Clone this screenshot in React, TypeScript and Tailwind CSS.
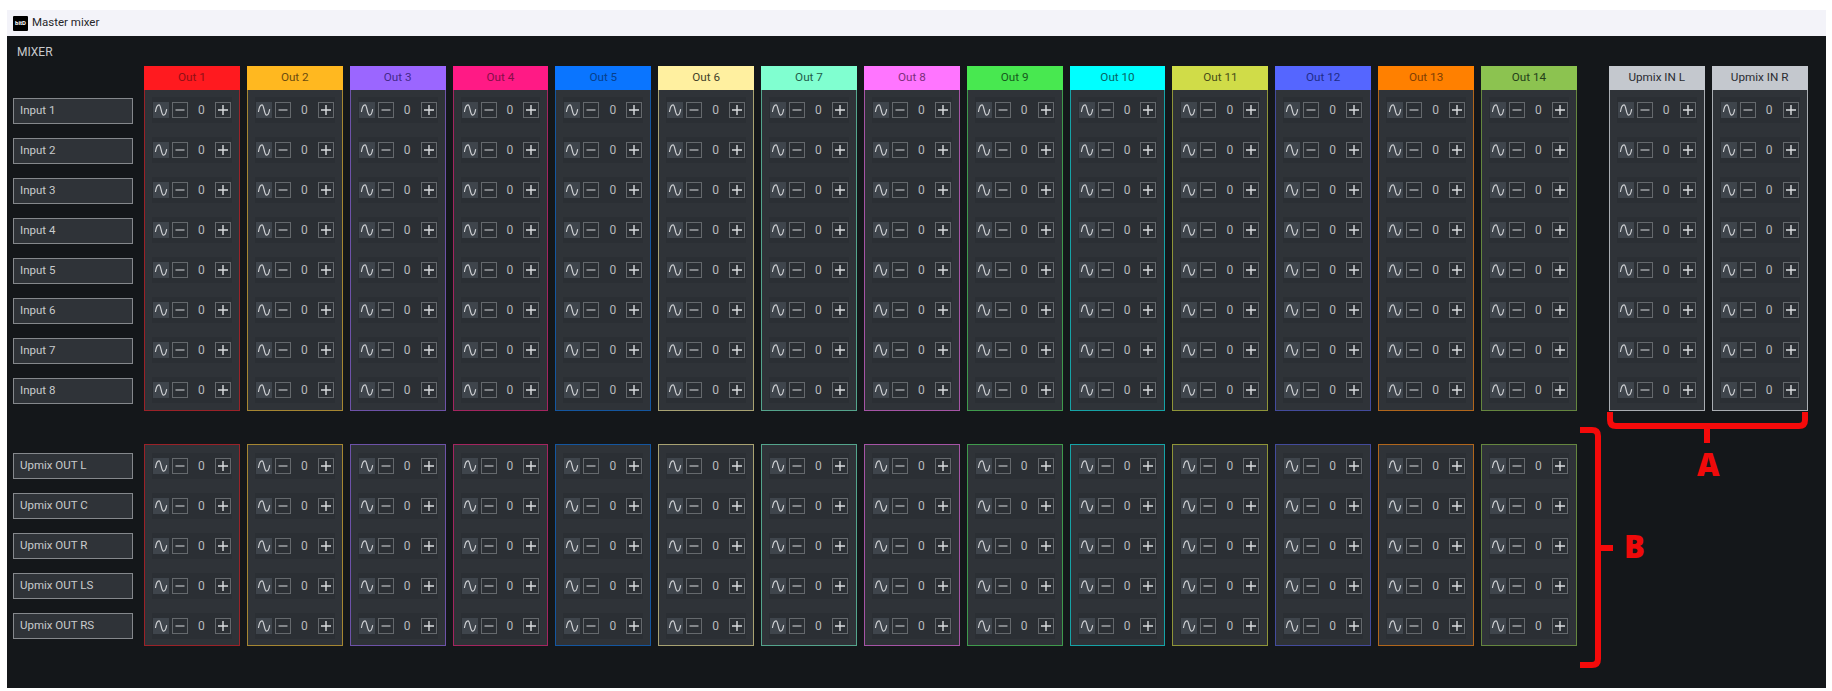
const outs = [
  { name: "Out 1", head: "bg-[#ff1a1f]", text: "text-[#8f1015]", border: "border-[#9a2228]" },
  { name: "Out 2", head: "bg-[#ffb820]", text: "text-[#6b4c10]", border: "border-[#a58632]" },
  { name: "Out 3", head: "bg-[#9b66ff]", text: "text-[#44288a]", border: "border-[#6d52a8]" },
  { name: "Out 4", head: "bg-[#ff1a85]", text: "text-[#850f48]", border: "border-[#a3255f]" },
  { name: "Out 5", head: "bg-[#0a75ff]", text: "text-[#07408c]", border: "border-[#14569f]" },
  { name: "Out 6", head: "bg-[#fff0a0]", text: "text-[#45422a]", border: "border-[#a8a272]" },
  { name: "Out 7", head: "bg-[#80ffd0]", text: "text-[#1f5c4a]", border: "border-[#54a48c]" },
  { name: "Out 8", head: "bg-[#ff75ff]", text: "text-[#7c2f7c]", border: "border-[#a554a5]" },
  { name: "Out 9", head: "bg-[#48e850]", text: "text-[#17591d]", border: "border-[#3f9a4c]" },
  { name: "Out 10", head: "bg-[#00ffff]", text: "text-[#086464]", border: "border-[#16a3a6]" },
  { name: "Out 11", head: "bg-[#d0dc48]", text: "text-[#484c18]", border: "border-[#8e9438]" },
  { name: "Out 12", head: "bg-[#5566ff]", text: "text-[#202c88]", border: "border-[#434b9c]" },
  { name: "Out 13", head: "bg-[#ff8000]", text: "text-[#7f3f05]", border: "border-[#b0661c]" },
  { name: "Out 14", head: "bg-[#8cc350]", text: "text-[#24401a]", border: "border-[#65863f]" },
];

const upmixIn = [
  { name: "Upmix IN L", head: "bg-[#c4c8ce]", text: "text-[#2a2c32]", border: "border-[#a9adb2]" },
  { name: "Upmix IN R", head: "bg-[#c4c8ce]", text: "text-[#2a2c32]", border: "border-[#a9adb2]" },
];

const inputs = ["Input 1", "Input 2", "Input 3", "Input 4", "Input 5", "Input 6", "Input 7", "Input 8"];
const upmixOut = ["Upmix OUT L", "Upmix OUT C", "Upmix OUT R", "Upmix OUT LS", "Upmix OUT RS"];

function Wave() {
  return (
    <div className="w-[16px] h-[16px] bg-[#3f454c] flex items-center justify-center">
      <svg width="16" height="16" viewBox="0 0 16 16" fill="none" stroke="#d0d2d5" strokeWidth="1.2" strokeLinecap="round">
        <path d="M2.5 9.5C3.2 5 4.3 2.8 6 2.8C8.2 2.8 8 13.2 10.6 13.2C12.2 13.2 13 11 13.6 7.5" />
      </svg>
    </div>
  );
}

function StepButton({ plus }: { plus?: boolean }) {
  return (
    <div className="w-[16px] h-[16px] border border-[#65696d] flex items-center justify-center">
      <svg width="14" height="14" viewBox="0 0 14 14" fill="none" stroke={plus ? "#dcdee0" : "#a9acb0"} strokeWidth="1.4">
        <path d={plus ? "M2 7H12M7 2V12" : "M2.5 7H11.5"} />
      </svg>
    </div>
  );
}

function Row() {
  return (
    <div className="h-[26px] mx-[7px] bg-[#2b2f34] flex items-center pl-[1px] pr-[1px]">
      <Wave />
      <div className="ml-[3px]">
        <StepButton />
      </div>
      <div className="flex-1 text-center text-[12px] text-[#b8babd]">0</div>
      <StepButton plus />
    </div>
  );
}

type Col = { name: string; head: string; text: string; border: string };

function Column({ col, rows, header }: { col: Col; rows: number; header?: boolean }) {
  return (
    <div className={`w-[95.85px] shrink-0 border bg-[#2f3338] ${col.border} ${header ? "" : "pt-[8px] pb-[6px]"}`}>
      {header && (
        <div className={`h-[24px] -mx-px -mt-px mb-[7px] flex items-center justify-center text-[11.7px] ${col.head} ${col.text}`}>
          {col.name}
        </div>
      )}
      <div className={`flex flex-col gap-[14px] ${header ? "pb-[7px]" : ""}`}>
        {Array.from({ length: rows }).map((_, i) => (
          <Row key={i} />
        ))}
      </div>
    </div>
  );
}

function Labels({ names, top }: { names: string[]; top: string }) {
  return (
    <div className={`w-[120px] ml-[6px] mr-[11px] shrink-0 flex flex-col gap-[14px] ${top}`}>
      {names.map((n) => (
        <div
          key={n}
          className="h-[26px] border border-[#85888c] bg-[#2f3338] flex items-center pl-[6px] text-[11.5px] text-[#c8cacc]"
        >
          {n}
        </div>
      ))}
    </div>
  );
}

export default function App() {
  return (
    <div
      className="relative h-[691px] w-full overflow-hidden bg-white pt-[10px] pl-[7px] pr-[6px]"
      style={{ fontFamily: 'Roboto, "Noto Sans", sans-serif' }}
    >
      <div className="h-[26px] bg-[#f3f3f9] flex items-center pl-[6px] gap-[4px] text-[11.5px] text-[#26262a]">
        <div className="w-[15px] h-[15px] bg-black rounded-[1px] flex items-center justify-center text-[6px] font-bold text-white leading-none">
          bitD
        </div>
        <span>Master mixer</span>
      </div>

      <div className="h-[652px] bg-[#14171a]">
        <div className="h-[30px] pl-[10px] pt-[7px] text-[12px] leading-[18px] text-[#c8cacc]">MIXER</div>

        <div className="flex">
          <Labels names={inputs} top="pt-[32px]" />
          <div className="flex gap-[7px]">
            {outs.map((c) => (
              <Column key={c.name} col={c} rows={8} header />
            ))}
          </div>
          <div className="flex gap-[7px] ml-[32px]">
            {upmixIn.map((c) => (
              <Column key={c.name} col={c} rows={8} header />
            ))}
          </div>
        </div>

        <div className="flex mt-[33px]">
          <Labels names={upmixOut} top="pt-[9px]" />
          <div className="flex gap-[7px]">
            {outs.map((c) => (
              <Column key={c.name} col={c} rows={5} />
            ))}
          </div>
        </div>
      </div>

      {/* Red annotations drawn over the screenshot */}
      <svg className="absolute left-0 top-0 pointer-events-none" width="1832" height="691" fill="none" stroke="#f50a0a" strokeWidth="6">
        <path d="M1610 412V420Q1610 426 1616 426H1799Q1805 426 1805 420V412M1707 426V443" />
        <path d="M1580 430H1592Q1598 430 1598 436V659Q1598 665 1592 665H1580M1598 548H1613" />
      </svg>
      <span
        className="absolute left-[1697px] top-[444px] text-[31px] leading-[40px] font-extrabold text-[#f00a0a]"
        style={{ fontFamily: '"Open Sans", sans-serif' }}
      >
        A
      </span>
      <span
        className="absolute left-[1624px] top-[526px] text-[31px] leading-[40px] font-extrabold text-[#f00a0a]"
        style={{ fontFamily: '"Open Sans", sans-serif' }}
      >
        B
      </span>
    </div>
  );
}
